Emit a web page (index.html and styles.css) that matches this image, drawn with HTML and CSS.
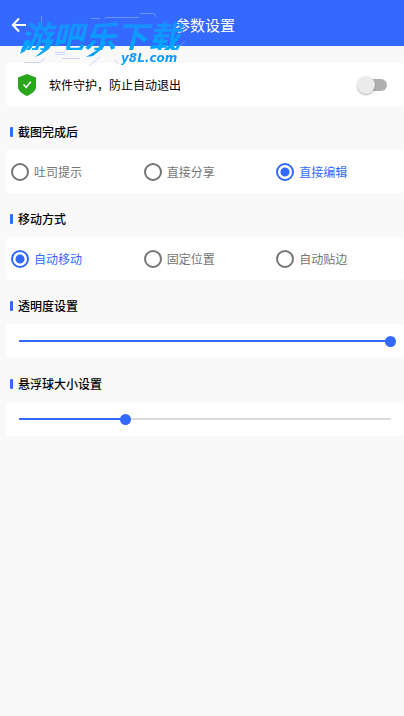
FILE: index.html
```html
<!DOCTYPE html>
<html lang="zh-CN">
<head>
<meta charset="utf-8">
<meta name="viewport" content="width=device-width, initial-scale=1">
<title>参数设置</title>
<link rel="stylesheet" href="styles.css">
</head>
<body>
<header class="bar">
  <button class="back" type="button" aria-label="返回">
    <svg width="16" height="16" viewBox="0 0 16 16" fill="none" stroke="#fff" stroke-width="2"><path d="M8 1.500 1.800 8 8 14.500M2 8h13"/></svg>
  </button>
  <h1 class="title">参数设置</h1>
  <div class="mark">
    <svg class="mark-lines" width="180" height="60" viewBox="0 0 180 60" fill="none">
      <path d="M90 9.500 92 7.500h33M126 3.500h14l3 4M77 8.500h9M27.500 6v9M166 36l5-5" stroke="#6f92ff"/>
      <path d="M41 42.500h10M41 44.500h9M48 48.500h18M10 52.500h16l5-4M75 56l11-9M100 50l5 4" stroke="#cdd3f8"/>
      <path d="M11 30 6 44 11 41 17 32zM33 32 28 41 21 47 26 45 35 39 39 32zM88 32 83 40 72 47 79 46 89 38 93 32z" fill="#08a0ff"/>
    </svg>
    <span class="mark-name">游吧乐下载</span>
    <span class="mark-site">y8L.com</span>
  </div>
</header>
<main class="page">
  <label class="card guard">
    <svg width="18" height="22" viewBox="0 0 18 22"><path d="M9 0 18 3.500V13c0 4-4.500 7-9 9-4.500-2-9-5-9-9V3.500z" fill="#29a61b"/><path d="m5.500 10.500 2.700 2.700 4.600-5.400" fill="none" stroke="#fff" stroke-width="1.600"/></svg>
    <span class="guard-text">软件守护，防止自动退出</span>
    <input class="switch" type="checkbox">
  </label>

  <h2 class="heading" id="after">截图完成后</h2>
  <div class="card choices" role="radiogroup" aria-labelledby="after">
    <label class="choice"><input type="radio" name="after"><span>吐司提示</span></label>
    <label class="choice"><input type="radio" name="after"><span>直接分享</span></label>
    <label class="choice"><input type="radio" name="after" checked><span>直接编辑</span></label>
  </div>

  <h2 class="heading" id="move">移动方式</h2>
  <div class="card choices" role="radiogroup" aria-labelledby="move">
    <label class="choice"><input type="radio" name="move" checked><span>自动移动</span></label>
    <label class="choice"><input type="radio" name="move"><span>固定位置</span></label>
    <label class="choice"><input type="radio" name="move"><span>自动贴边</span></label>
  </div>

  <h2 class="heading"><label for="alpha">透明度设置</label></h2>
  <div class="card level">
    <input class="slider" id="alpha" type="range" min="0" max="1000" value="1000" style="--level: 1">
  </div>

  <h2 class="heading"><label for="size">悬浮球大小设置</label></h2>
  <div class="card level">
    <input class="slider" id="size" type="range" min="0" max="1000" value="286" style="--level: 0.286">
  </div>
</main>
</body>
</html>
```
FILE: styles.css
```css
:root {
  --blue: #3369ff;
}

* {
  box-sizing: border-box;
}

body {
  margin: 0;
  min-height: 100vh;
  background: #f9f9f9;
  color: #000;
  font: 12px/18px "Noto Sans CJK SC", sans-serif;
}

.bar {
  position: relative;
  display: grid;
  grid-template-columns: 40px 1fr 34px;
  align-items: center;
  height: 46px;
  padding-top: 3px;
  background: var(--blue);
  color: #fff;
}

.back {
  display: flex;
  padding: 0 0 0 11px;
  border: 0;
  background: none;
}

.title {
  margin: 0;
  font-size: 15px;
  line-height: 20px;
  font-weight: 400;
  text-align: center;
}

/* Site mark laid over the top bar */
.mark {
  position: absolute;
  left: 14px;
  top: 10px;
  width: 180px;
  height: 60px;
  pointer-events: none;
}

.mark-lines {
  position: absolute;
  inset: 0;
}

.mark-name,
.mark-site {
  position: absolute;
  font-style: italic;
  font-weight: 700;
  white-space: nowrap;
  background: linear-gradient(#1c8cff, #00a8ff);
  -webkit-background-clip: text;
  background-clip: text;
  color: transparent;
}

.mark-name {
  left: 6px;
  top: 10px;
  padding-right: 8px;
  font-size: 32px;
  line-height: 30px;
}

.mark-site {
  left: 106px;
  top: 41px;
  padding: 0 4px 0 1px;
  font-family: "DejaVu Sans", sans-serif;
  font-size: 12px;
  line-height: 14px;
}

.page {
  padding: 17px 0 17px 6px;
}

.card {
  min-height: 43px;
  background: #fff;
  border-radius: 4px;
}

.guard {
  display: flex;
  align-items: center;
  gap: 13px;
  padding: 0 17px 0 12px;
}

.guard-text {
  flex: 1;
}

.switch {
  appearance: none;
  position: relative;
  width: 30px;
  height: 18px;
  margin: 0;
}

.switch::before,
.switch::after {
  content: "";
  position: absolute;
}

.switch::before {
  inset: 3px 0 3px 4px;
  border-radius: 6px;
  background: #b0b0b0;
}

.switch::after {
  left: 0;
  top: 0;
  width: 18px;
  height: 18px;
  border-radius: 50%;
  background: #ececec;
  box-shadow: 0 1px 2px rgba(0, 0, 0, 0.3);
}

.switch:checked::after {
  left: 12px;
  background: var(--blue);
}

.heading {
  display: flex;
  align-items: center;
  gap: 5px;
  height: 44px;
  margin: 0;
  padding: 8px 0 0 4px;
  font-size: 12px;
  font-weight: 500;
}

.heading::before {
  content: "";
  width: 3px;
  height: 10px;
  border-radius: 1px;
  background: var(--blue);
}

.choices {
  display: grid;
  grid-template-columns: repeat(3, 1fr);
}

.choice {
  display: flex;
  align-items: center;
  gap: 5px;
  padding-left: 5px;
  color: #757575;
}

.choice:has(:checked) {
  color: var(--blue);
}

.choice input {
  appearance: none;
  width: 18px;
  height: 18px;
  margin: 0;
  border: 2px solid #757575;
  border-radius: 50%;
}

.choice input:checked {
  border-color: var(--blue);
  background: radial-gradient(circle, var(--blue) 4px, transparent 5px);
}

.level {
  display: flex;
  align-items: center;
  min-height: 34px;
  padding: 0 8px;
}

.slider {
  --stop: calc(5px + (100% - 11px) * var(--level));
  appearance: none;
  flex: 1;
  min-width: 0;
  height: 12px;
  margin: 0;
  background: linear-gradient(to right, transparent 5px, var(--blue) 5px var(--stop), #dcdcdc var(--stop) calc(100% - 5px), transparent 0) center / 100% 2px no-repeat;
}

.slider::-webkit-slider-thumb {
  appearance: none;
  width: 11px;
  height: 11px;
  border-radius: 50%;
  background: var(--blue);
}

.slider::-moz-range-thumb {
  width: 11px;
  height: 11px;
  border: 0;
  border-radius: 50%;
  background: var(--blue);
}
```
